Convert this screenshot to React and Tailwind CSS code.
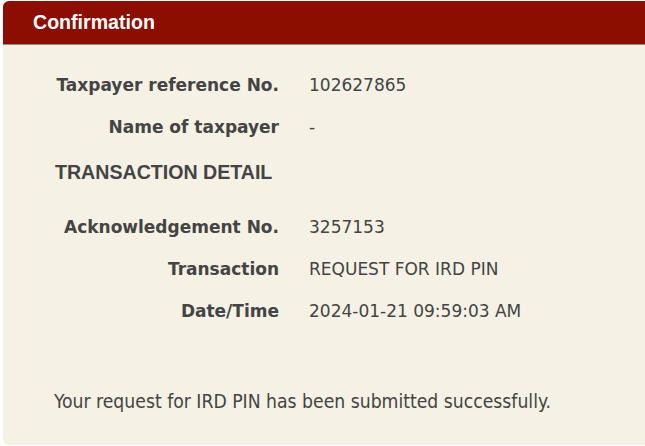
export default function App() {
  const rows1 = [
    ["Taxpayer reference No.", "102627865"],
    ["Name of taxpayer", "-"],
  ];
  const rows2 = [
    ["Acknowledgement No.", "3257153"],
    ["Transaction", "REQUEST FOR IRD PIN"],
    ["Date/Time", "2024-01-21 09:59:03 AM"],
  ];
  const Row = ({ l, v }) => (
    <div className="flex h-[42px] items-center">
      <div className="w-[276px] shrink-0 text-right font-bold text-[17px] text-[#444444]" style={{ fontFamily: '"DejaVu Sans", Verdana, sans-serif' }}>
        {l}
      </div>
      <div className="pl-[30px] text-[17px] text-[#444444]" style={{ fontFamily: '"DejaVu Sans", Verdana, sans-serif' }}>
        {v}
      </div>
    </div>
  );
  return (
    <div className="w-[645px] h-[446px] bg-white overflow-hidden">
      <div className="ml-[3px] mt-[1px] w-[660px] h-[444px] rounded-l-md overflow-hidden bg-[#f5f1e5] flex flex-col">
        <div className="h-[44px] bg-[#8b0e00] border-b border-[#8a8a8a] flex items-center pl-[30px]">
          <span className="text-white font-bold text-[19.6px]" style={{ fontFamily: '"Liberation Sans", Arial, sans-serif' }}>
            Confirmation
          </span>
        </div>
        <div className="pt-[20px]">
          {rows1.map(([l, v]) => <Row key={l} l={l} v={v} />)}
        </div>
        <div className="pl-[52px] h-[48px] flex items-center">
          <span className="font-bold text-[19.6px] text-[#444444]" style={{ fontFamily: '"Liberation Sans", Arial, sans-serif' }}>
            TRANSACTION DETAIL
          </span>
        </div>
        <div className="pt-[10px]">
          {rows2.map(([l, v]) => <Row key={l} l={l} v={v} />)}
        </div>
        <div className="pl-[51px] pt-[55px] text-[19.2px] text-[#444444]" style={{ fontFamily: '"DejaVu Sans Condensed", Tahoma, sans-serif' }}>
          Your request for IRD PIN has been submitted successfully.
        </div>
      </div>
    </div>
  );
}
